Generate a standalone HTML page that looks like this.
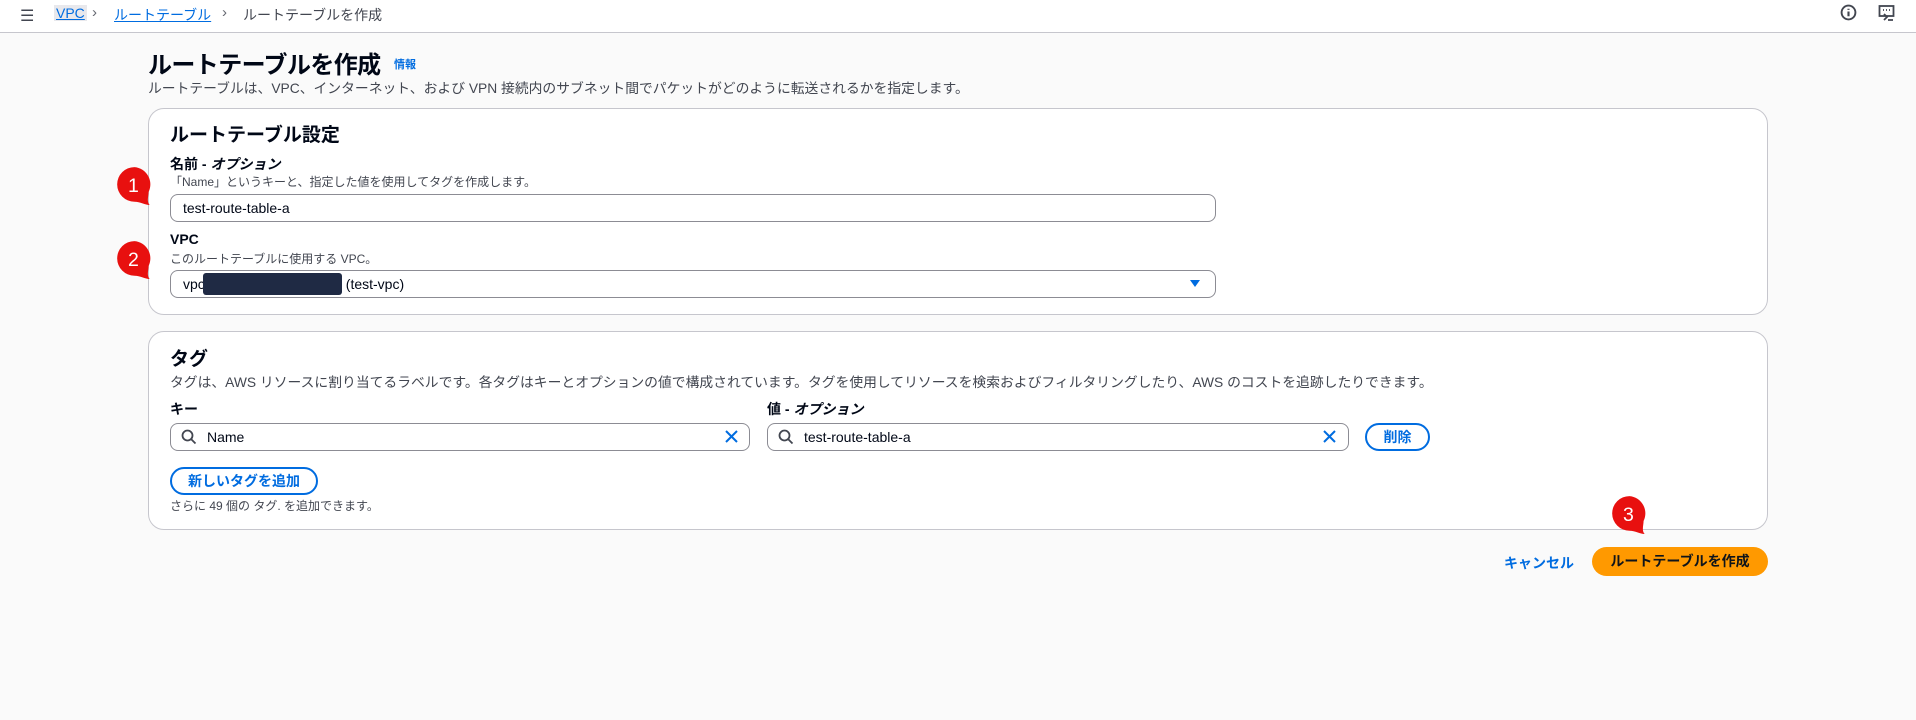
<!DOCTYPE html>
<html><head><meta charset="utf-8"><style>
*{box-sizing:border-box;margin:0;padding:0}
body{width:1916px;height:720px;background:#fafafa;font-family:"Liberation Sans","Noto Sans CJK JP",sans-serif;color:#000716;position:relative;overflow:hidden}
.abs{position:absolute;white-space:nowrap}
.top{position:absolute;left:0;top:0;width:1916px;height:33px;background:#fff;border-bottom:1px solid #c6c6cd}
.panel{position:absolute;left:148px;width:1620px;background:#fff;border:1px solid #c6c6cd;border-radius:16px}
.inp{position:absolute;height:28px;border:1px solid #8c8c94;border-radius:8px;background:#fff;font-size:14px;line-height:26px;padding-left:12px}
.lbl{font-size:14px;font-weight:bold}
.desc{font-size:12px;color:#424650}
.btn{position:absolute;border:2px solid #006ce0;border-radius:20px;color:#006ce0;font-weight:bold;font-size:14px;text-align:center;background:#fff}
.badge{position:absolute;width:39px;height:39px}
</style></head><body>
<div class="top"></div>
<div class="abs" style="left:20px;top:6px;font-size:16px;color:#424650">☰</div>
<div class="abs" style="left:54px;top:5px;font-size:14px;color:#006ce0;background:#e8e8ec;padding:0 2px;text-decoration:underline">VPC</div>
<div class="abs" style="left:92px;top:4px;font-size:15px;color:#656871">›</div>
<div class="abs" style="left:114px;top:5px;font-size:14px;color:#006ce0;text-decoration:underline">ルートテーブル</div>
<div class="abs" style="left:222px;top:4px;font-size:15px;color:#656871">›</div>
<div class="abs" style="left:243px;top:5px;font-size:14px;color:#424650">ルートテーブルを作成</div>
<svg class="abs" style="left:1840px;top:4px" width="17" height="17" viewBox="0 0 16 16"><circle cx="8" cy="8" r="6.5" fill="none" stroke="#424650" stroke-width="1.8"/><path d="M8 7v4.5M8 4.5v1" stroke="#424650" stroke-width="2"/></svg>
<svg class="abs" style="left:1878px;top:4px" width="18" height="18" viewBox="0 0 18 18"><rect x="1.5" y="2" width="14" height="10" fill="none" stroke="#424650" stroke-width="1.8"/><path d="M5 6h1M8 6h1M11 6h1M6 10l3 3-3 3M10 16h5" stroke="#424650" stroke-width="1.8" fill="none"/></svg>

<div class="abs" style="left:148px;top:45px;font-size:24px;font-weight:bold;letter-spacing:-0.6px">ルートテーブルを作成</div>
<div class="abs" style="left:394px;top:56px;font-size:11px;font-weight:bold;color:#006ce0">情報</div>
<div class="abs" style="left:148px;top:77px;font-size:13.8px;color:#424650">ルートテーブルは、VPC、インターネット、および VPN 接続内のサブネット間でパケットがどのように転送されるかを指定します。</div>

<div class="panel" style="top:108px;height:207px"></div>
<div class="abs" style="left:170px;top:120px;font-size:19px;font-weight:bold">ルートテーブル設定</div>
<div class="abs lbl" style="left:170px;top:154px">名前 - <i>オプション</i></div>
<div class="abs desc" style="left:170px;top:173px">「Name」というキーと、指定した値を使用してタグを作成します。</div>
<div class="inp" style="left:170px;top:194px;width:1046px">test-route-table-a</div>
<div class="abs lbl" style="left:170px;top:231px">VPC</div>
<div class="abs desc" style="left:170px;top:250px">このルートテーブルに使用する VPC。</div>
<div class="inp" style="left:170px;top:270px;width:1046px">vpc<span style="display:inline-block;width:139px;height:22px;background:#1f2a44;border-radius:3px;vertical-align:middle;margin:-3px 4px 0 -2px"></span>(test-vpc)</div>
<svg class="abs" style="left:1189px;top:279px" width="12" height="10"><path d="M1 1h10L6 8z" fill="#006ce0"/></svg>

<div class="panel" style="top:331px;height:199px"></div>
<div class="abs" style="left:170px;top:344px;font-size:19px;font-weight:bold">タグ</div>
<div class="abs" style="left:170px;top:371px;font-size:13.8px;color:#424650">タグは、AWS リソースに割り当てるラベルです。各タグはキーとオプションの値で構成されています。タグを使用してリソースを検索およびフィルタリングしたり、AWS のコストを追跡したりできます。</div>
<div class="abs lbl" style="left:170px;top:399px">キー</div>
<div class="abs lbl" style="left:767px;top:399px">値 - <i>オプション</i></div>
<div class="inp" style="left:170px;top:423px;width:580px;padding-left:36px">Name</div>
<div class="inp" style="left:767px;top:423px;width:582px;padding-left:36px">test-route-table-a</div>
<svg class="abs" style="left:181px;top:429px" width="16" height="16" viewBox="0 0 16 16"><circle cx="6.5" cy="6.5" r="5" fill="none" stroke="#424650" stroke-width="1.8"/><path d="M10 10l4.5 4.5" stroke="#424650" stroke-width="1.8"/></svg>
<svg class="abs" style="left:778px;top:429px" width="16" height="16" viewBox="0 0 16 16"><circle cx="6.5" cy="6.5" r="5" fill="none" stroke="#424650" stroke-width="1.8"/><path d="M10 10l4.5 4.5" stroke="#424650" stroke-width="1.8"/></svg>
<svg class="abs" style="left:724px;top:429px" width="15" height="15"><path d="M2 2l11 11M13 2L2 13" stroke="#006ce0" stroke-width="2"/></svg>
<svg class="abs" style="left:1322px;top:429px" width="15" height="15"><path d="M2 2l11 11M13 2L2 13" stroke="#006ce0" stroke-width="2"/></svg>
<div class="btn" style="left:1365px;top:423px;width:65px;height:28px;line-height:24px">削除</div>
<div class="btn" style="left:170px;top:467px;width:148px;height:28px;line-height:24px">新しいタグを追加</div>
<div class="abs desc" style="left:170px;top:497px">さらに 49 個の タグ. を追加できます。</div>

<div class="abs" style="left:1504px;top:553px;font-size:14px;font-weight:bold;color:#006ce0">キャンセル</div>
<div class="abs" style="left:1592px;top:547px;width:176px;height:29px;border-radius:16px;background:#ff9900;font-size:14px;font-weight:bold;text-align:center;line-height:29px;color:#0f141a">ルートテーブルを作成</div>

<svg class="badge" style="left:115px;top:166px" viewBox="0 0 36 36"><path d="M18 1a16 16 0 1 0 0 32c5 0 10 3 14 3c-3-3-1-8-1-12A16 16 0 0 0 18 1z" fill="#e8100f"/><text x="17" y="24" font-size="18" fill="#fff" text-anchor="middle" font-family="Liberation Sans">1</text></svg>
<svg class="badge" style="left:115px;top:240px" viewBox="0 0 36 36"><path d="M18 1a16 16 0 1 0 0 32c5 0 10 3 14 3c-3-3-1-8-1-12A16 16 0 0 0 18 1z" fill="#e8100f"/><text x="17" y="24" font-size="18" fill="#fff" text-anchor="middle" font-family="Liberation Sans">2</text></svg>
<svg class="badge" style="left:1610px;top:495px" viewBox="0 0 36 36"><path d="M18 1a16 16 0 1 0 0 32c5 0 10 3 14 3c-3-3-1-8-1-12A16 16 0 0 0 18 1z" fill="#e8100f"/><text x="17" y="24" font-size="18" fill="#fff" text-anchor="middle" font-family="Liberation Sans">3</text></svg>
</body></html>
